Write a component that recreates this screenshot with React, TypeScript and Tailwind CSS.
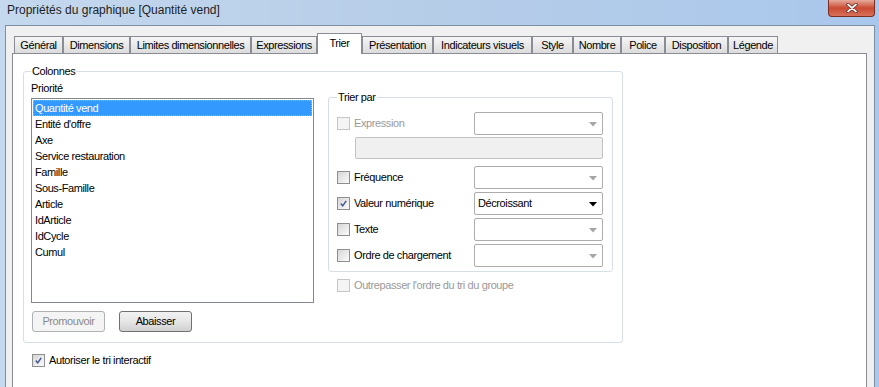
import React from "react";

const tabs: [string, number][] = [
  ["Général", 49],
  ["Dimensions", 67],
  ["Limites dimensionnelles", 121],
  ["Expressions", 66],
  ["Trier", 45],
  ["Présentation", 71],
  ["Indicateurs visuels", 99],
  ["Style", 41],
  ["Nombre", 48],
  ["Police", 44],
  ["Disposition", 63],
  ["Légende", 50],
];

const fields = [
  "Quantité vend",
  "Entité d'offre",
  "Axe",
  "Service restauration",
  "Famille",
  "Sous-Famille",
  "Article",
  "IdArticle",
  "IdCycle",
  "Cumul",
];

const CheckBox = ({ checked = false, disabled = false }: { checked?: boolean; disabled?: boolean }) => (
  <div
    className={
      disabled
        ? "flex h-[13px] w-[13px] shrink-0 items-center justify-center border border-[#c6c6c6] bg-[#f4f4f4]"
        : "flex h-[13px] w-[13px] shrink-0 items-center justify-center border border-[#8e8f8f] bg-linear-to-br from-[#d6d6d6] to-[#fbfbfb] p-[2px]"
    }
  >
    {checked && (
      <svg width="9" height="9" viewBox="0 0 9 9">
        <path d="M1 4.5 L3.5 7.5 L8 1" fill="none" stroke="#3d5297" strokeWidth="1.8" />
      </svg>
    )}
  </div>
);

const Combo = ({ value = "", enabled = false }: { value?: string; enabled?: boolean }) => (
  <div className="ml-auto flex h-[23px] w-[129px] items-center justify-between rounded-[2px] border border-[#acacac] bg-white pl-[3px] pr-[5px]">
    <span>{value}</span>
    <svg width="8" height="5" viewBox="0 0 8 5" className="mt-[2px]">
      <path d="M0 0 H8 L4 4.5 Z" fill={enabled ? "#000" : "#a6a6a6"} />
    </svg>
  </div>
);

const SortRow = ({ label, checked, disabled, value, enabled }: { label: string; checked?: boolean; disabled?: boolean; value?: string; enabled?: boolean }) => (
  <div className="flex items-center">
    <CheckBox checked={checked} disabled={disabled} />
    <span className={disabled ? "ml-[4px] text-[#9a9a9a]" : "ml-[4px]"}>{label}</span>
    <Combo value={value} enabled={enabled} />
  </div>
);

export default function App() {
  return (
    <div className="flex h-[387px] w-[879px] flex-col overflow-hidden bg-linear-to-r from-[#c4d8ee] via-[#b6cde8] to-[#a9c7ec] font-['Liberation_Sans',sans-serif] text-[11px] leading-[13px] tracking-[-0.4px] text-black">
      {/* title bar */}
      <div className="flex h-[25px] shrink-0 items-start justify-between">
        <div className="pl-[7px] pt-[2px] text-[12px] leading-[16px] tracking-normal text-[#1e1e1e]">
          Propriétés du graphique [Quantité vend]
        </div>
        <div className="mr-[4px] flex h-[17px] w-[47px] items-center justify-center rounded-b-[4px] border border-t-0 border-[#7a2e22] bg-linear-to-b from-[#e5a99c] via-[#c94a31] to-[#d8705a]">
          <svg width="12" height="10" viewBox="0 0 12 10">
            <path d="M2 1.5 L10 8.5 M10 1.5 L2 8.5" stroke="#5a2a22" strokeWidth="3.4" strokeLinecap="round" />
            <path d="M2 1.5 L10 8.5 M10 1.5 L2 8.5" stroke="#f4f4f4" strokeWidth="1.8" strokeLinecap="round" />
          </svg>
        </div>
      </div>

      {/* dialog body */}
      <div className="ml-[5px] mr-[4px] flex flex-1 flex-col border border-b-0 border-[#7d8fa3] bg-[#f0f0f0] pt-[7px]">
        <div className="ml-[8px] flex items-end">
          {tabs.map(([name, w]) =>
            name === "Trier" ? (
              <div
                key={name}
                style={{ width: w }}
                className="relative z-10 -mb-px flex h-[21px] items-start justify-center border border-b-0 border-[#898c95] bg-white pt-[3px]"
              >
                {name}
              </div>
            ) : (
              <div
                key={name}
                style={{ width: w }}
                className="flex h-[17px] items-center justify-center border border-b-0 border-[#898c95] bg-linear-to-b from-[#f5f5f5] to-[#dcdcdc] pt-[1px]"
              >
                {name}
              </div>
            )
          )}
        </div>

        <div className="ml-[6px] mr-[7px] flex-1 border border-b-0 border-[#898c95] bg-white pl-[10px] pt-[11px]">
          <fieldset className="h-[278px] w-[600px] rounded-[3px] border border-[#d5dfe5] pl-[7px]">
            <legend className="px-[1px]">Colonnes</legend>
            <div className="flex items-start">
              <div className="flex w-[283px] flex-col">
                <div className="mt-[4px]">Priorité</div>
                <div className="mt-[3px] h-[205px] border border-[#828790] bg-white p-[1px]">
                  {fields.map((f, i) =>
                    i === 0 ? (
                      <div key={f} className="h-[16px] border border-dotted border-[#f3a25b] bg-[#3399ff] pl-[1px] leading-[14px] text-white">
                        {f}
                      </div>
                    ) : (
                      <div key={f} className="h-[16px] pl-[2px] leading-[16px]">
                        {f}
                      </div>
                    )
                  )}
                </div>
                <div className="mt-[8px] flex gap-[14px] pl-px">
                  <div className="flex h-[21px] w-[73px] items-center justify-center rounded-[3px] border border-[#adb2b5] bg-[#f4f4f4] text-[#8a8a8a]">
                    Promouvoir
                  </div>
                  <div className="flex h-[21px] w-[73px] items-center justify-center rounded-[3px] border border-[#707070] bg-linear-to-b from-[#f2f2f2] via-[#e6e6e6] to-[#d0d0d0]">
                    Abaisser
                  </div>
                </div>
              </div>

              <div className="ml-[14px] mt-[13px] flex w-[285px] flex-col">
                <fieldset className="rounded-[3px] border border-[#d5dfe5] pb-[4px] pl-[8px] pr-[9px]">
                  <legend className="px-[1px]">Trier par</legend>
                  <div className="mt-[8px]">
                    <SortRow label="Expression" disabled />
                  </div>
                  <div className="ml-[18px] mt-[2px] h-[22px] rounded-[2px] border border-[#c2c2c2] bg-[#f0f0f0]" />
                  <div className="mt-[7px] flex flex-col gap-[3px]">
                    <SortRow label="Fréquence" />
                    <SortRow label="Valeur numérique" checked value="Décroissant" enabled />
                    <SortRow label="Texte" />
                    <SortRow label="Ordre de chargement" />
                  </div>
                </fieldset>
                <div className="mt-[7px] flex items-center pl-[9px]">
                  <CheckBox disabled />
                  <span className="ml-[4px] text-[#9a9a9a]">Outrepasser l'ordre du tri du groupe</span>
                </div>
              </div>
            </div>
          </fieldset>

          <div className="ml-[9px] mt-[11px] flex items-center">
            <CheckBox checked />
            <span className="ml-[4px]">Autoriser le tri interactif</span>
          </div>
        </div>
      </div>
    </div>
  );
}
